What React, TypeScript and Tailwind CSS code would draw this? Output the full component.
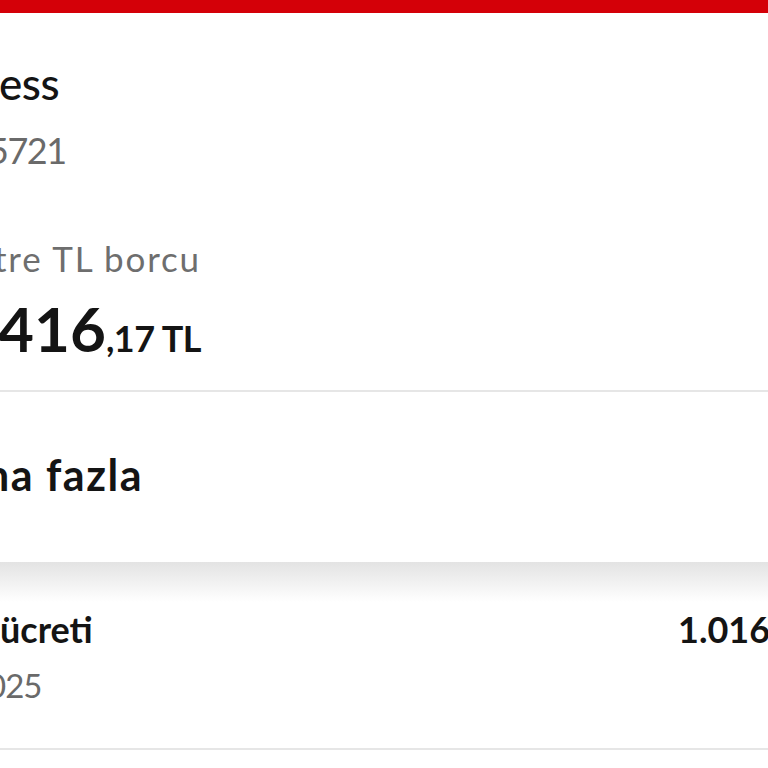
import React from 'react';

const font = { fontFamily: 'Lato, "Noto Sans", sans-serif' };

export default function App() {
  return (
    <div className="w-[768px] h-[768px] overflow-hidden bg-white text-[#141414]" style={font}>
      <div className="h-[13px] bg-[#d40008]" />

      <section className="whitespace-nowrap">
        <div className="mt-[48px] -ml-[1px] text-[44px] leading-none font-medium tracking-[-0.5px]">ess</div>
        <div className="mt-[27px] -ml-[12px] text-[36px] leading-none text-[#6a6a6a] tracking-[-1.5px]">5721</div>
        <div className="mt-[73px] -ml-[6px] text-[35px] leading-none text-[#6e6e6e] tracking-[1.8px]">tre TL borcu</div>
        <div className="mt-[21px] -ml-[2px] leading-none font-bold">
          <span className="text-[62px]">416</span>
          <span className="text-[36px] tracking-[-0.5px]">,17 TL</span>
        </div>
      </section>

      <div className="mt-[31px] h-[2px] bg-[#e6e6e6]" />

      <div className="mt-[61px] -ml-[15px] text-[43px] leading-none font-bold tracking-[1.5px] whitespace-nowrap">na fazla</div>

      <div className="mt-[66px] h-[40px] bg-linear-to-b from-[#e3e3e3] to-white" />

      <div className="mt-[9px] flex whitespace-nowrap">
        <div className="w-[680px] shrink-0 text-[36px] leading-none font-bold">ücreti</div>
        <div className="-ml-[2px] text-[36px] leading-none font-bold">1.016,24 TL</div>
      </div>
      <div className="mt-[22px] -ml-[13px] text-[33px] leading-none text-[#6a6a6a] tracking-[-1px] whitespace-nowrap">025</div>

      <div className="mt-[46px] h-[2px] bg-[#e6e6e6]" />
    </div>
  );
}
